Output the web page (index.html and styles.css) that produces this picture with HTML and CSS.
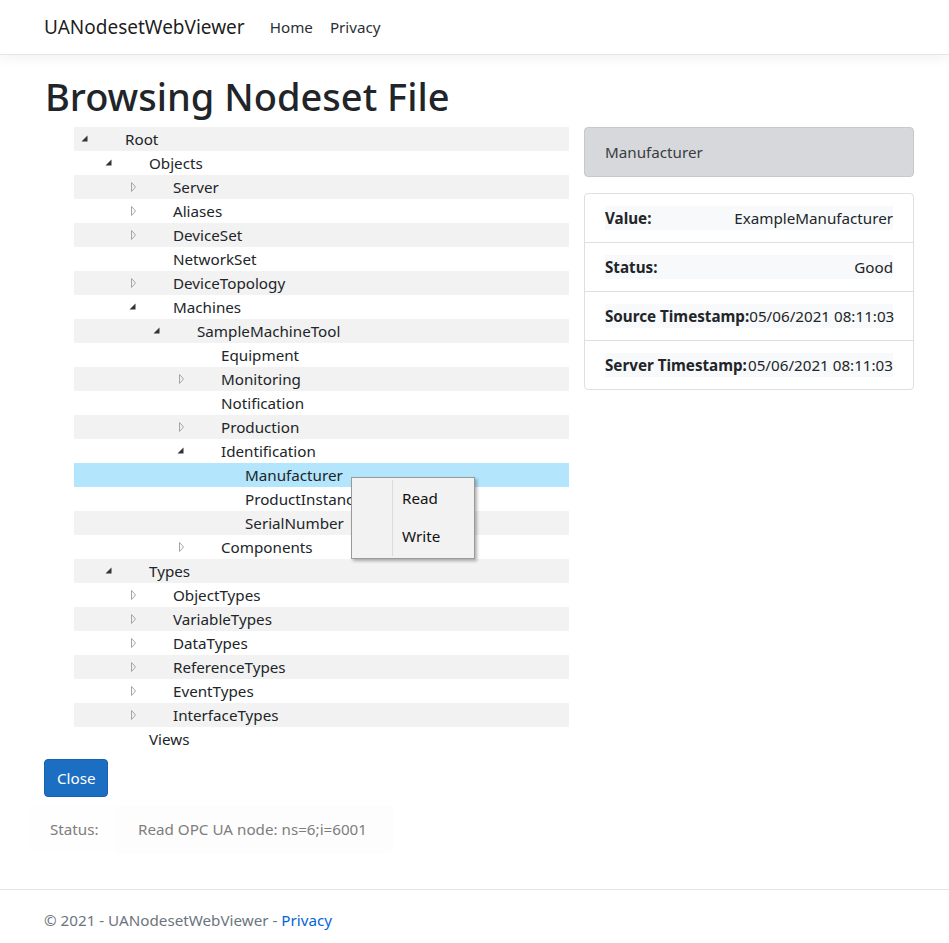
FILE: index.html
```html
<!DOCTYPE html>
<html lang="en">
<head>
<meta charset="utf-8">
<title>Browsing Nodeset File - UANodesetWebViewer</title>
<link rel="stylesheet" href="styles.css">
</head>
<body>
<header class="navbar">
  <a class="brand" href="#">UANodesetWebViewer</a>
  <nav class="nav">
    <a class="nav-link" href="#">Home</a>
    <a class="nav-link" href="#">Privacy</a>
  </nav>
</header>

<main class="main">
  <h1 class="title">Browsing Nodeset File</h1>
  <div class="layout">
    <div class="tree">
      <div class="row alt l0"><span class="tog"><svg class="ico" viewBox="0 0 12 12"><polygon class="exp" points="9.5,2.5 9.5,8.5 3.5,8.5"/></svg></span><span class="label">Root</span></div>
      <div class="row l1"><span class="tog"><svg class="ico" viewBox="0 0 12 12"><polygon class="exp" points="9.5,2.5 9.5,8.5 3.5,8.5"/></svg></span><span class="label">Objects</span></div>
      <div class="row alt l2"><span class="tog"><svg class="ico" viewBox="0 0 12 12"><polygon class="col" points="5.5,1.5 5.5,10.5 9.5,6"/></svg></span><span class="label">Server</span></div>
      <div class="row l2"><span class="tog"><svg class="ico" viewBox="0 0 12 12"><polygon class="col" points="5.5,1.5 5.5,10.5 9.5,6"/></svg></span><span class="label">Aliases</span></div>
      <div class="row alt l2"><span class="tog"><svg class="ico" viewBox="0 0 12 12"><polygon class="col" points="5.5,1.5 5.5,10.5 9.5,6"/></svg></span><span class="label">DeviceSet</span></div>
      <div class="row l2"><span class="tog"></span><span class="label">NetworkSet</span></div>
      <div class="row alt l2"><span class="tog"><svg class="ico" viewBox="0 0 12 12"><polygon class="col" points="5.5,1.5 5.5,10.5 9.5,6"/></svg></span><span class="label">DeviceTopology</span></div>
      <div class="row l2"><span class="tog"><svg class="ico" viewBox="0 0 12 12"><polygon class="exp" points="9.5,2.5 9.5,8.5 3.5,8.5"/></svg></span><span class="label">Machines</span></div>
      <div class="row alt l3"><span class="tog"><svg class="ico" viewBox="0 0 12 12"><polygon class="exp" points="9.5,2.5 9.5,8.5 3.5,8.5"/></svg></span><span class="label">SampleMachineTool</span></div>
      <div class="row l4"><span class="tog"></span><span class="label">Equipment</span></div>
      <div class="row alt l4"><span class="tog"><svg class="ico" viewBox="0 0 12 12"><polygon class="col" points="5.5,1.5 5.5,10.5 9.5,6"/></svg></span><span class="label">Monitoring</span></div>
      <div class="row l4"><span class="tog"></span><span class="label">Notification</span></div>
      <div class="row alt l4"><span class="tog"><svg class="ico" viewBox="0 0 12 12"><polygon class="col" points="5.5,1.5 5.5,10.5 9.5,6"/></svg></span><span class="label">Production</span></div>
      <div class="row l4"><span class="tog"><svg class="ico" viewBox="0 0 12 12"><polygon class="exp" points="9.5,2.5 9.5,8.5 3.5,8.5"/></svg></span><span class="label">Identification</span></div>
      <div class="row selected l5"><span class="tog"></span><span class="label">Manufacturer</span></div>
      <div class="row l5"><span class="tog"></span><span class="label">ProductInstanceUri</span></div>
      <div class="row alt l5"><span class="tog"></span><span class="label">SerialNumber</span></div>
      <div class="row l4"><span class="tog"><svg class="ico" viewBox="0 0 12 12"><polygon class="col" points="5.5,1.5 5.5,10.5 9.5,6"/></svg></span><span class="label">Components</span></div>
      <div class="row alt l1"><span class="tog"><svg class="ico" viewBox="0 0 12 12"><polygon class="exp" points="9.5,2.5 9.5,8.5 3.5,8.5"/></svg></span><span class="label">Types</span></div>
      <div class="row l2"><span class="tog"><svg class="ico" viewBox="0 0 12 12"><polygon class="col" points="5.5,1.5 5.5,10.5 9.5,6"/></svg></span><span class="label">ObjectTypes</span></div>
      <div class="row alt l2"><span class="tog"><svg class="ico" viewBox="0 0 12 12"><polygon class="col" points="5.5,1.5 5.5,10.5 9.5,6"/></svg></span><span class="label">VariableTypes</span></div>
      <div class="row l2"><span class="tog"><svg class="ico" viewBox="0 0 12 12"><polygon class="col" points="5.5,1.5 5.5,10.5 9.5,6"/></svg></span><span class="label">DataTypes</span></div>
      <div class="row alt l2"><span class="tog"><svg class="ico" viewBox="0 0 12 12"><polygon class="col" points="5.5,1.5 5.5,10.5 9.5,6"/></svg></span><span class="label">ReferenceTypes</span></div>
      <div class="row l2"><span class="tog"><svg class="ico" viewBox="0 0 12 12"><polygon class="col" points="5.5,1.5 5.5,10.5 9.5,6"/></svg></span><span class="label">EventTypes</span></div>
      <div class="row alt l2"><span class="tog"><svg class="ico" viewBox="0 0 12 12"><polygon class="col" points="5.5,1.5 5.5,10.5 9.5,6"/></svg></span><span class="label">InterfaceTypes</span></div>
      <div class="row l1"><span class="tog"></span><span class="label">Views</span></div>

      <div class="menu">
        <div class="menu-item">Read</div>
        <div class="menu-item">Write</div>
      </div>
    </div>

    <aside class="side">
      <div class="node-title">Manufacturer</div>
      <ul class="props">
        <li class="prop"><div class="prop-in"><b>Value:</b><span>ExampleManufacturer</span></div></li>
        <li class="prop"><div class="prop-in"><b>Status:</b><span>Good</span></div></li>
        <li class="prop"><div class="prop-in"><b>Source Timestamp:</b><span>05/06/2021 08:11:03</span></div></li>
        <li class="prop"><div class="prop-in"><b>Server Timestamp:</b><span>05/06/2021 08:11:03</span></div></li>
      </ul>
    </aside>
  </div>

  <button class="btn" type="button">Close</button>

  <div class="status">
    <span class="status-label">Status:</span>
    <span class="status-value">Read OPC UA node: ns=6;i=6001</span>
  </div>
</main>

<footer class="footer">
  &copy; 2021 - UANodesetWebViewer - <a href="#">Privacy</a>
</footer>
</body>
</html>
```

FILE: styles.css
```css
* { box-sizing: border-box; }

html, body { height: 100%; }

body {
  margin: 0;
  font-family: "Noto Sans", "Open Sans", sans-serif;
  font-size: 15.2px;
  line-height: 24px;
  color: #212529;
  background: #fff;
  display: flex;
  flex-direction: column;
}

a { text-decoration: none; }

.navbar {
  height: 55px;
  flex: none;
  display: flex;
  align-items: center;
  padding-left: 44px;
  border-bottom: 1px solid #e5e5e5;
  box-shadow: 0 4px 12px rgba(0, 0, 0, 0.05);
  background: #fff;
}

.brand {
  font-size: 19px;
  color: rgba(0, 0, 0, 0.9);
  margin-right: 25px;
}

.nav { display: flex; gap: 17px; }

.nav-link {
  color: #2b3035;
  font-size: 15.2px;
}

.main {
  flex: 1;
  padding: 0 35px 0 45px;
}

.title {
  font-size: 38px;
  font-weight: 500;
  line-height: 48px;
  margin: 17px 0 7px;
  color: #212529;
}

.layout {
  display: grid;
  grid-template-columns: 495px 330px;
  column-gap: 15px;
  margin-left: 29px;
}

.tree { position: relative; }

.row {
  height: 24px;
  display: flex;
  align-items: center;
  white-space: nowrap;
  overflow: hidden;
}
.row.alt { background: #f2f2f2; }
.row.selected { background: #b3e5fc; }

.l0 { padding-left: 0; }
.l1 { padding-left: 24px; }
.l2 { padding-left: 48px; }
.l3 { padding-left: 72px; }
.l4 { padding-left: 96px; }
.l5 { padding-left: 120px; }

.tog {
  flex: none;
  width: 51px;
  height: 24px;
  display: flex;
  align-items: center;
  padding-left: 4px;
}

.ico { width: 12px; height: 12px; display: block; }
.exp { fill: #333; }
.col { fill: none; stroke: #a6a6a6; stroke-width: 1; }

.label { color: #212529; }

.menu {
  position: absolute;
  left: 277px;
  top: 350px;
  width: 124px;
  height: 82px;
  background: #f2f2f2;
  border: 1px solid #9a9a9a;
  box-shadow: 2px 2px 3px rgba(0, 0, 0, 0.3);
  padding: 6px 0 0 50px;
}
.menu::before {
  content: "";
  position: absolute;
  left: 40px;
  top: 2px;
  bottom: 2px;
  border-left: 1px solid #dcdcdc;
}
.menu-item {
  height: 38px;
  line-height: 28px;
  color: #111;
}

.side { min-width: 0; }

.node-title {
  height: 50px;
  padding: 12px 20px;
  background: #d6d8db;
  border: 1px solid #c6c8ca;
  border-radius: 4px;
  color: #383d41;
  margin-bottom: 16px;
}

.props {
  list-style: none;
  margin: 0;
  padding: 0;
  border: 1px solid #dfdfdf;
  border-radius: 4px;
}

.prop {
  padding: 12px 20px;
  border-top: 1px solid #dfdfdf;
}
.prop:first-child { border-top: 0; }

.prop-in {
  display: flex;
  justify-content: space-between;
  background: #f8f9fa;
  white-space: nowrap;
}
.prop-in b { font-weight: 700; }

.btn {
  display: block;
  margin-top: 8px;
  height: 38px;
  padding: 6px 12px;
  font-family: inherit;
  font-size: 15.2px;
  line-height: 24px;
  color: #fff;
  background: #1b6ec2;
  border: 1px solid #1861ac;
  border-radius: 4px;
  margin-left: -1px;
  width: 64px;
}

.status {
  display: flex;
  width: 363px;
  height: 48px;
  margin: 8px 0 36px -15px;
  background: #fefefe;
  border-radius: 4px;
  color: #7d7d7d;
}
.status-label {
  width: 85px;
  padding: 12px 0 0 20px;
}
.status-value {
  flex: 1;
  padding: 12px 0 0 23px;
  background: #fdfdfd;
  border-radius: 4px;
}

.footer {
  flex: none;
  height: 54px;
  line-height: 60px;
  padding-left: 44px;
  border-top: 1px solid #e5e5e5;
  color: #6c757d;
  font-size: 15.2px;
}
.footer a { color: #0366d6; }
```
